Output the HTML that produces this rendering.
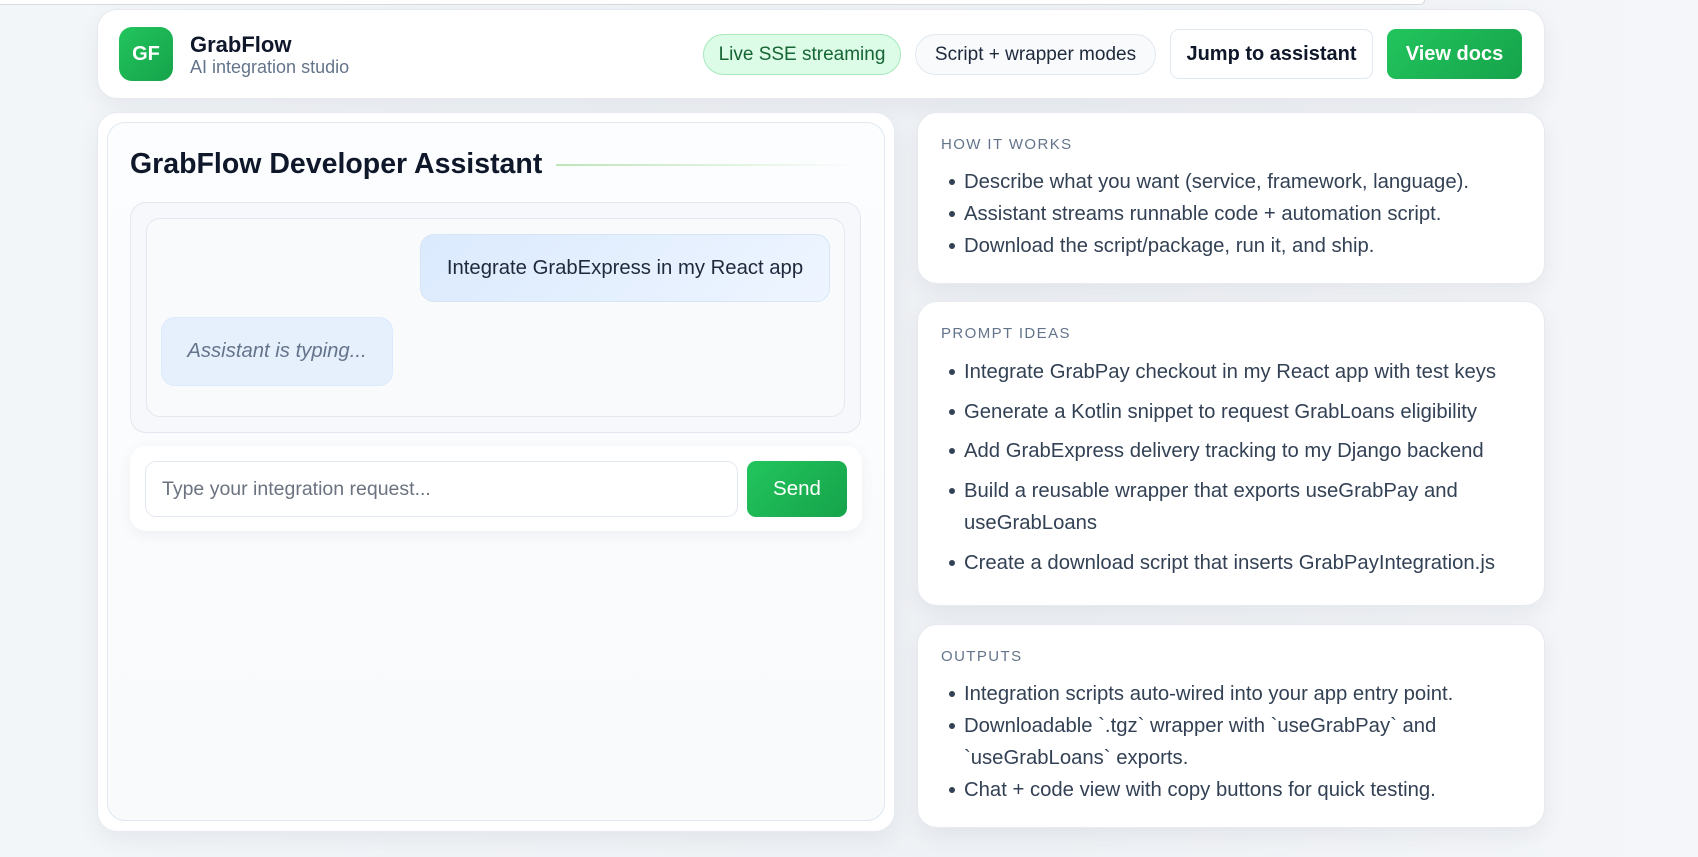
<!DOCTYPE html>
<html><head><style>
*{box-sizing:border-box;margin:0;padding:0}
body{width:1698px;height:857px;overflow:hidden;background:linear-gradient(90deg,#f3f6f9,#eef1f5 60%,#f4f6f9);font-family:"Liberation Sans",sans-serif;color:#0f172a;position:relative}
.topline{position:absolute;left:0;top:0;width:1425px;height:5px;border-bottom:1.5px solid #d8dadd;border-right:1.5px solid #d8dadd;border-radius:0 0 8px 0;background:#fff}
.card{position:absolute;background:#fff;border:1px solid #e6e9ef;border-radius:20px;box-shadow:0 8px 24px rgba(15,23,42,.06)}
.logo{position:absolute;left:119px;top:27px;width:54px;height:54px;border-radius:13px;background:linear-gradient(135deg,#22c55e,#16a34a);color:#fff;font-weight:bold;font-size:20px;display:flex;align-items:center;justify-content:center}
.pill{position:absolute;border-radius:21px;display:flex;align-items:center;justify-content:center;font-size:19px}
.btn{position:absolute;border-radius:9px;display:flex;align-items:center;justify-content:center;font-size:20px;font-weight:bold}
.rc h4{position:absolute;left:23px;font-size:15px;font-weight:normal;letter-spacing:1.4px;color:#64748b}
.rc ul{position:absolute;left:23px;right:10px;list-style:none;font-size:20.3px;color:#334155}
.rc li{position:relative;padding-left:23px}
.rc li:before{content:"";position:absolute;left:8px;top:13px;width:6px;height:6px;border-radius:50%;background:#334155}
</style></head><body>
<div class="topline"></div>
<div class="card" style="left:97px;top:9px;width:1448px;height:90px"></div>
<div class="logo">GF</div>
<div style="position:absolute;left:190px;top:32px;font-size:22px;font-weight:bold">GrabFlow</div>
<div style="position:absolute;left:190px;top:57px;font-size:18px;color:#64748b">AI integration studio</div>
<div class="pill" style="left:703px;top:34px;width:198px;height:41px;background:#dcfce7;border:1px solid #a7e8bd;color:#166534">Live SSE streaming</div>
<div class="pill" style="left:915px;top:34px;width:241px;height:41px;background:#f8fafc;border:1px solid #e2e8f0;color:#1e293b">Script + wrapper modes</div>
<div class="btn" style="left:1170px;top:29px;width:203px;height:50px;background:#fff;border:1px solid #e2e8f0;color:#0f172a">Jump to assistant</div>
<div class="btn" style="left:1387px;top:29px;width:135px;height:50px;background:linear-gradient(135deg,#22c55e,#16a34a);color:#fff">View docs</div>

<div class="card" style="left:97px;top:112px;width:798px;height:720px"></div>
<div style="position:absolute;left:107px;top:122px;width:778px;height:699px;border:1px solid #e2e8f0;border-radius:18px;background:linear-gradient(180deg,#fcfdfe,#f8fafc)"></div>
<div style="position:absolute;left:130px;top:148px;font-size:28.5px;font-weight:bold;color:#0f172a">GrabFlow Developer Assistant</div>
<div style="position:absolute;left:556px;top:164px;width:300px;height:2px;background:linear-gradient(90deg,#bde5b8,rgba(255,255,255,0))"></div>
<div style="position:absolute;left:130px;top:202px;width:731px;height:231px;border:1px solid #e2e8f0;border-radius:16px;background:#f6f8fb"></div>
<div style="position:absolute;left:146px;top:218px;width:699px;height:199px;border:1px solid #e2e8f0;border-radius:14px;background:#f8fafc"></div>
<div style="position:absolute;left:420px;top:234px;width:410px;height:68px;border:1px solid #d6e4f5;border-radius:14px;background:linear-gradient(135deg,#dbeafe,#eef5ff);display:flex;align-items:center;justify-content:center;font-size:20.3px;color:#1e293b">Integrate GrabExpress in my React app</div>
<div style="position:absolute;left:161px;top:317px;width:232px;height:69px;border:1px solid #dbeafe;border-radius:14px;background:#e6f0fd;display:flex;align-items:center;justify-content:center;font-size:20.3px;font-style:italic;color:#64748b">Assistant is typing...</div>
<div style="position:absolute;left:130px;top:446px;width:732px;height:85px;border-radius:16px;background:#fff;box-shadow:0 4px 14px rgba(15,23,42,.05)"></div>
<div style="position:absolute;left:145px;top:461px;width:593px;height:56px;border:1px solid #e2e8f0;border-radius:11px;background:#fff;padding-left:16px;display:flex;align-items:center;font-size:19.5px;color:#6b7280">Type your integration request...</div>
<div class="btn" style="left:747px;top:461px;width:100px;height:56px;background:linear-gradient(135deg,#22c55e,#16a34a);color:#fff;font-weight:normal;font-size:20.5px">Send</div>

<div class="card rc" style="left:917px;top:112px;width:628px;height:172px">
<h4 style="top:23px">HOW IT WORKS</h4>
<ul style="top:53px;line-height:32px">
<li>Describe what you want (service, framework, language).</li>
<li>Assistant streams runnable code + automation script.</li>
<li>Download the script/package, run it, and ship.</li></ul></div>
<div class="card rc" style="left:917px;top:301px;width:628px;height:305px">
<h4 style="top:23px">PROMPT IDEAS</h4>
<ul style="top:54px;line-height:32.5px">
<li style="margin-bottom:7px">Integrate GrabPay checkout in my React app with test keys</li>
<li style="margin-bottom:7px">Generate a Kotlin snippet to request GrabLoans eligibility</li>
<li style="margin-bottom:7px">Add GrabExpress delivery tracking to my Django backend</li>
<li style="margin-bottom:7px">Build a reusable wrapper that exports useGrabPay and useGrabLoans</li>
<li>Create a download script that inserts GrabPayIntegration.js</li></ul></div>
<div class="card rc" style="left:917px;top:624px;width:628px;height:204px">
<h4 style="top:23px">OUTPUTS</h4>
<ul style="top:53px;line-height:32px">
<li>Integration scripts auto-wired into your app entry point.</li>
<li>Downloadable `.tgz` wrapper with `useGrabPay` and `useGrabLoans` exports.</li>
<li>Chat + code view with copy buttons for quick testing.</li></ul></div>
</body></html>
